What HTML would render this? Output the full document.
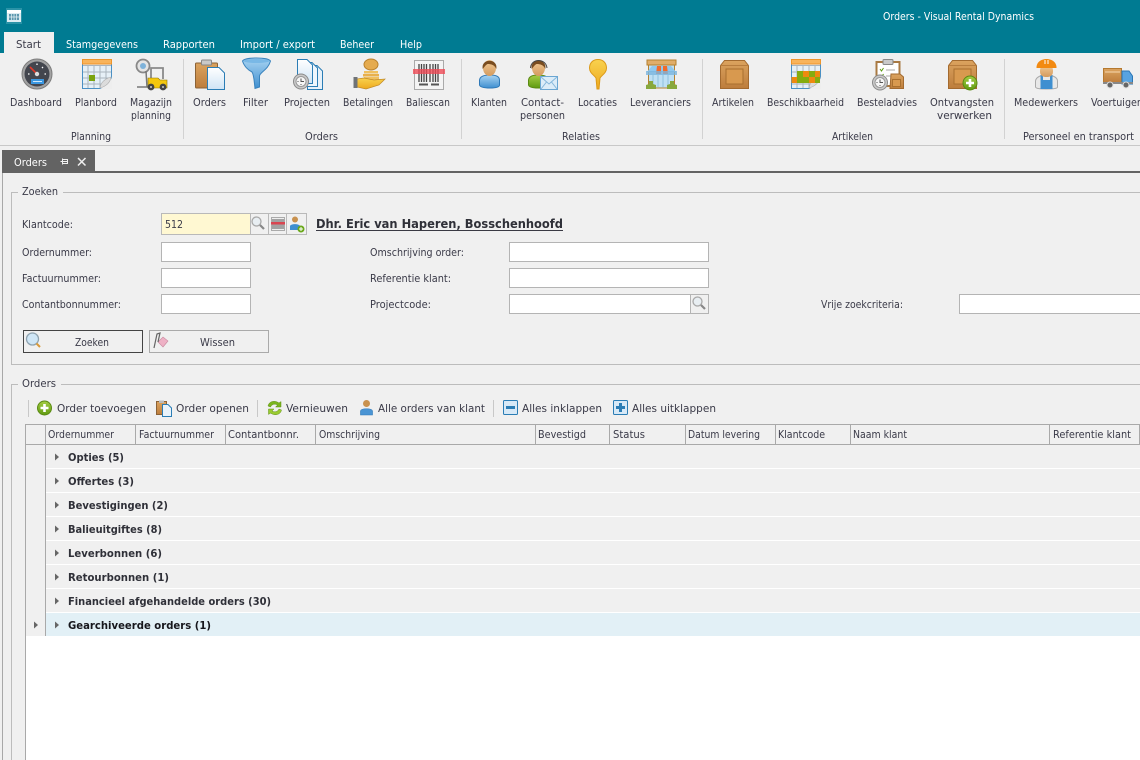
<!DOCTYPE html>
<html><head><meta charset="utf-8"><title>Orders - Visual Rental Dynamics</title>
<style>
html,body{margin:0;padding:0;background:#f0f0f0;overflow:hidden}
svg{display:block}
text{font-family:"DejaVu Sans","Liberation Sans",sans-serif;font-size:11px;fill:#3a3a48}
.w{fill:#fff}.b{font-weight:bold;fill:#2f3038;font-size:11px}
</style></head><body>
<svg width="1140" height="760" viewBox="0 0 1140 760" xmlns="http://www.w3.org/2000/svg">
<defs>
<linearGradient id="box" x1="0" y1="0" x2="0" y2="1"><stop offset="0" stop-color="#dba35f"/><stop offset="1" stop-color="#bd7d3c"/></linearGradient>
<linearGradient id="blue" x1="0" y1="0" x2="0" y2="1"><stop offset="0" stop-color="#a9d4f2"/><stop offset="1" stop-color="#3f8fd0"/></linearGradient>
<linearGradient id="gold" x1="0" y1="0" x2="0" y2="1"><stop offset="0" stop-color="#f9d24f"/><stop offset="1" stop-color="#eda91e"/></linearGradient>
<linearGradient id="doc" x1="0" y1="0" x2="0" y2="1"><stop offset="0" stop-color="#fff"/><stop offset="1" stop-color="#cfe4f5"/></linearGradient>
<linearGradient id="skin" x1="0" y1="0" x2="0" y2="1"><stop offset="0" stop-color="#f2cb96"/><stop offset="1" stop-color="#d39a5e"/></linearGradient>
<linearGradient id="green" x1="0" y1="0" x2="0" y2="1"><stop offset="0" stop-color="#a6cd45"/><stop offset="1" stop-color="#5f9a10"/></linearGradient>
<g id="clock"><circle cx="0" cy="0" r="7.500" fill="#c9c9c9" stroke="#8a8a8a"/><circle r="5" fill="#f6f6f6" stroke="#999"/><path d="M0-3V0H3M-3.500 0h1M0 2.500v1" stroke="#555" fill="none"/></g>
<g id="plus"><circle r="7" fill="url(#green)" stroke="#5a8a12"/><path d="M-4 0H4M0-4V4" stroke="#fff" stroke-width="2.600"/></g>
<g id="arrow"><path d="M0-3.500 4 0 0 3.500Z" fill="#666"/></g>
<g id="mag"><circle cx="-1.500" cy="-1.500" r="4.500" fill="#e8eef2" stroke="#a8a8a8" stroke-width="1.300"/><path d="M2 2 6 6" stroke="#888" stroke-width="2.200"/></g>
<g id="cal"><rect x=".5" y=".5" width="29" height="29" fill="#e6f0f7" stroke="#4a90c4"/><rect x=".5" y=".5" width="29" height="4.500" fill="#f8b45c" stroke="#f0952a"/><path d="M1 6.500H29M1 13H29M1 19H29M1 25H29M6 6V29M12 6V29M18 6V29M24 6V29" stroke="#aab5be" stroke-width="1" fill="none"/><path d="M18 30 30 30 30 18 Q28 25 18 30Z" fill="#eee"/><path d="M18 29 Q19 21 29 18 Q28 26 18 29Z" fill="#dcdcdc" stroke="#aaa" stroke-width=".6"/></g>
<g id="boxi"><path d="M4 0H24L28 5V28H0V5Z" fill="url(#box)" stroke="#a36a2f"/><path d="M0 5H28" stroke="#b87d3e"/><rect x="5.500" y="8.500" width="17" height="15" fill="#d8994f" stroke="#a9702f"/></g>
<g id="board"><rect x="0" y="3" width="22" height="25" rx="1" fill="url(#box)" stroke="#8b6236"/><rect x="6" y="0" width="10" height="5" rx="1" fill="#c9c9c9" stroke="#888"/></g>
<g id="head"><ellipse cx="0" cy="0" rx="6.500" ry="8" fill="url(#skin)"/><path d="M-6.800 1C-9-10 9-10 6.800 1 5-3 2-4-2-4-4-3-5-1-6.800 1Z" fill="#7a4d20"/></g>
</defs>

<rect width="1140" height="760" fill="#f0f0f0"/>
<!-- title bar -->
<rect width="1140" height="53" fill="#007b92"/>
<rect x="6" y="8" width="16" height="16" fill="#2a93a7"/>
<rect x="7" y="10" width="14" height="12" fill="#dcecf2"/>
<rect x="7" y="10" width="14" height="3" fill="#fff"/>
<path d="M9 14h10v6H9Z" fill="#5c97ae"/><path d="M11.500 14v6M14 14v6M16.500 14v6M9 17h10" stroke="#e6f2f6" stroke-width=".7"/>
<text class="w" x="883" y="20" textLength="151" lengthAdjust="spacingAndGlyphs">Orders - Visual Rental Dynamics</text>
<rect x="4" y="32" width="50" height="21" fill="#f0f0f0"/>
<text x="16" y="48" textLength="25" lengthAdjust="spacingAndGlyphs">Start</text>
<text class="w" x="66" y="48" textLength="72" lengthAdjust="spacingAndGlyphs">Stamgegevens</text>
<text class="w" x="163" y="48" textLength="52" lengthAdjust="spacingAndGlyphs">Rapporten</text>
<text class="w" x="240" y="48" textLength="75" lengthAdjust="spacingAndGlyphs">Import / export</text>
<text class="w" x="340" y="48" textLength="34" lengthAdjust="spacingAndGlyphs">Beheer</text>
<text class="w" x="400" y="48" textLength="22" lengthAdjust="spacingAndGlyphs">Help</text>

<!-- ribbon -->
<rect y="145" width="1140" height="1" fill="#c8c8c8"/>
<path d="M183.500 59V139M461.500 59V139M702.500 59V139M1004.500 59V139" stroke="#d2d2d2"/>

<!-- Dashboard -->
<circle cx="37" cy="74" r="15" fill="#a3a3a3" stroke="#7c7c7c"/><circle cx="37" cy="74" r="12.500" fill="#43464e"/>
<path d="M30 67 37 74" stroke="#e23a2a" stroke-width="1.600"/><circle cx="37" cy="74" r="2.200" fill="#ddd"/>
<path d="M37 63.500v1.500M28 74h1.500M44.500 74h1.500M43 67l-1 1" stroke="#fff" stroke-width="1.300"/>
<rect x="31" y="79" width="13" height="5" fill="#3b97e0"/><path d="M33 81.500h9" stroke="#cfe8fb"/>
<!-- Planbord -->
<use href="#cal" x="82" y="59"/><rect x="89" y="75" width="6" height="6" fill="#7aa30d"/>
<!-- Forklift -->
<circle cx="143" cy="66" r="6.500" fill="#e4e4e4" stroke="#888" stroke-width="1.800"/><circle cx="143" cy="66" r="3" fill="#7eb2da"/>
<path d="M146 71 147 87H137M147 87H155" stroke="#777" stroke-width="1.500" fill="none"/>
<path d="M151 79V68H163V79" stroke="#8a8a8a" stroke-width="1.800" fill="none"/><path d="M148 78H158L160 80H167V88H148Z" fill="#f4c70e" stroke="#8c7400" stroke-width=".6"/>
<circle cx="151" cy="87" r="3.400" fill="#444"/><circle cx="163" cy="87" r="3.400" fill="#444"/>
<circle cx="151" cy="87" r="1" fill="#ccc"/><circle cx="163" cy="87" r="1" fill="#ccc"/>
<!-- Orders -->
<use href="#board" x="195.500" y="60"/>
<path d="M207.500 67.500H219L224.500 73V89.500H207.500Z" fill="url(#doc)" stroke="#2b7db5"/>
<!-- Filter -->
<path d="M242.500 61C245 57 268 57 270.500 61 268 70 260 72 259.500 76V87L255 88.500C254 80 254 75 252 72 248 70 244 66 242.500 61Z" fill="url(#blue)" stroke="#3a83bd"/>
<ellipse cx="256.500" cy="61" rx="13" ry="2" fill="#79b8e6"/>
<!-- Projecten -->
<path d="M307.500 65.500H317L322.500 71V89.500H307.500Z" fill="#e6f1fa" stroke="#2b7db5"/>
<path d="M302.500 62.500H312L317.500 68V86.500H302.500Z" fill="#eef6fc" stroke="#2b7db5"/>
<path d="M297.500 59.500H307L312.500 65V83.500H297.500Z" fill="url(#doc)" stroke="#2b7db5"/>
<use href="#clock" x="301" y="81.500"/>
<!-- Betalingen -->
<ellipse cx="371" cy="64.500" rx="7" ry="5.500" fill="#e5ab4f" stroke="#b9812c"/>
<rect x="364" y="71" width="14" height="2.500" fill="#f0c05f"/><rect x="363" y="74" width="16" height="2.500" fill="#e8b04d"/><rect x="364" y="77" width="15" height="2.500" fill="#f0c05f"/>
<path d="M357 79 364 78 374 80 385 79 379 85 366 89 357 87Z" fill="url(#gold)" stroke="#c08a2a" stroke-width=".7"/>
<rect x="353.500" y="77" width="4" height="11" fill="#6f7377"/>
<!-- Baliescan -->
<rect x="414.500" y="60.500" width="29" height="29" fill="#f4f4f4" stroke="#aaa"/>
<path d="M419 64V82M421.500 64V82M424 64V82M426.500 64V82M430 64V82M433 64V82M435.500 64V82M438 64V82" stroke="#444" stroke-width="1.300"/>
<path d="M419 84.500H428M431 84.500H439" stroke="#555" stroke-width="2"/>
<rect x="413" y="69" width="32" height="5" fill="#ef4a55" opacity=".8"/>
<!-- Klanten -->
<path d="M479.500 85V80C480 76 485 75 490 75 495 75 499.500 76 499.500 80V85C499.500 87 497 88 490 88 483 88 480 87 479.500 85Z" fill="url(#blue)" stroke="#2f79b8"/>
<use href="#head" x="489.500" y="68"/>
<!-- Contact -->
<path d="M528.500 85V80C529 76 534 75 538 75 543 75 548 76 548 80V86C548 87 545 88 538 88 532 88 529 87 528.500 85Z" fill="url(#green)" stroke="#5a8a12"/>
<use href="#head" x="538.500" y="68"/><path d="M530.500 68C531 58 546 58 547 68" stroke="#444" fill="none"/>
<rect x="540.500" y="76.500" width="17" height="13" fill="#dbecf8" stroke="#6aa6d2"/><path d="M541 77 549 84 557 77M541 89 546.500 82M557 89 551.500 82" stroke="#84b6da" fill="none"/>
<!-- Locaties -->
<path d="M598 59.500C592 59.500 589.500 64 589.500 68 589.500 73 594 75 596 78L597 89H599L600 78C602 75 606.500 73 606.500 68 606.500 64 604 59.500 598 59.500Z" fill="url(#gold)" stroke="#dc9a18"/>
<!-- Leveranciers -->
<rect x="647" y="60" width="29" height="5" fill="#e0ad6a" stroke="#b5812f"/>
<rect x="648.500" y="65" width="26" height="23" fill="#bfe0f4" stroke="#b5812f"/>
<path d="M647 72 652 66H671L676 72Z" fill="#8fc8ee"/><path d="M657 66H661V74H656ZM663 66H667L668 74H663Z" fill="#f26a2a"/><path d="M646 71H677V75H646Z" fill="#7bb5de" opacity=".8"/>
<path d="M653 75V87M658 75V87M663 75V87M668 75V87" stroke="#8fbfdd"/>
<path d="M646 89V85L649 84V81H653V84L656 85V89ZM667 89V85L670 84V81H674V84L677 85V89Z" fill="#88a83d"/>
<!-- Artikelen -->
<use href="#boxi" x="720.500" y="60.500"/>
<!-- Beschik -->
<use href="#cal" x="791" y="59"/>
<path d="M797 71h6v6h-6ZM809 71h6v6h-6ZM803 77h6v6h-6Z" fill="#84ac10"/><path d="M803 71h6v6h-6ZM815 71h5v6h-5ZM791.500 77h6v6h-6ZM809 77h6v6h-6Z" fill="#ee8a10"/><path d="M797 77h6v6h-6ZM815 77h5v6h-5Z" fill="#84ac10"/>
<!-- Besteladvies -->
<rect x="876.500" y="62" width="23" height="24" fill="#fff" stroke="#a97a43" stroke-width="2"/><rect x="883" y="59.500" width="10" height="5" rx="1" fill="#c9c9c9" stroke="#888"/>
<path d="M880 69l1.500 2 2-3M880 75l1.500 2 2-3" stroke="#5a9c10" fill="none"/><path d="M886 70h9M886 76h9" stroke="#aaa"/>
<path d="M891 74H900L903.500 77V88.500H890Z" fill="url(#box)" stroke="#a36a2f"/><rect x="892.500" y="79.500" width="8" height="7" fill="#d8994f" stroke="#a9702f"/>
<use href="#clock" x="880" y="82.500"/>
<!-- Ontvangsten -->
<use href="#boxi" x="948.500" y="60.500"/><use href="#plus" x="970" y="83"/>
<!-- Medewerkers -->
<path d="M1035.500 87V81C1036 77 1041 75 1046 75 1052 75 1057.500 77 1057.500 81V87C1057.500 88.500 1054 89 1046 89 1039 89 1036 88.500 1035.500 87Z" fill="#e8e8e8" stroke="#aaa"/>
<path d="M1040.500 75V89H1052.500V75H1050V80H1043V75Z" fill="#3f8fd0"/>
<rect x="1040" y="65" width="13" height="12" rx="5" fill="url(#skin)"/>
<path d="M1036.500 68C1036 56 1057 56 1056.500 68Z" fill="#f28a12"/><path d="M1045 60v4M1048 60v4" stroke="#fff"/>
<!-- Voertuigen -->
<rect x="1103.500" y="68.500" width="18" height="14" fill="url(#box)" stroke="#b5792f"/><path d="M1105 72H1120" stroke="#f6d8b0"/>
<path d="M1122 71H1129L1132.500 76V84H1122Z" fill="#58a3e0" stroke="#2b76b5"/>
<rect x="1103" y="82" width="30" height="2" fill="#888"/>
<circle cx="1110" cy="85" r="3" fill="#666" stroke="#ddd"/><circle cx="1126" cy="85" r="3" fill="#666" stroke="#ddd"/>

<!-- ribbon labels -->
<text x="10" y="106" textLength="52" lengthAdjust="spacingAndGlyphs">Dashboard</text>
<text x="75" y="106" textLength="42" lengthAdjust="spacingAndGlyphs">Planbord</text>
<text x="130" y="106" textLength="42" lengthAdjust="spacingAndGlyphs">Magazijn</text>
<text x="131" y="119" textLength="40" lengthAdjust="spacingAndGlyphs">planning</text>
<text x="71" y="140" textLength="40" lengthAdjust="spacingAndGlyphs">Planning</text>
<text x="193" y="106" textLength="33" lengthAdjust="spacingAndGlyphs">Orders</text>
<text x="243" y="106" textLength="25" lengthAdjust="spacingAndGlyphs">Filter</text>
<text x="284" y="106" textLength="46" lengthAdjust="spacingAndGlyphs">Projecten</text>
<text x="343" y="106" textLength="50" lengthAdjust="spacingAndGlyphs">Betalingen</text>
<text x="406" y="106" textLength="44" lengthAdjust="spacingAndGlyphs">Baliescan</text>
<text x="305" y="140" textLength="33" lengthAdjust="spacingAndGlyphs">Orders</text>
<text x="471" y="106" textLength="36" lengthAdjust="spacingAndGlyphs">Klanten</text>
<text x="521" y="106" textLength="43" lengthAdjust="spacingAndGlyphs">Contact-</text>
<text x="520" y="119" textLength="45" lengthAdjust="spacingAndGlyphs">personen</text>
<text x="578" y="106" textLength="39" lengthAdjust="spacingAndGlyphs">Locaties</text>
<text x="630" y="106" textLength="61" lengthAdjust="spacingAndGlyphs">Leveranciers</text>
<text x="562" y="140" textLength="38" lengthAdjust="spacingAndGlyphs">Relaties</text>
<text x="712" y="106" textLength="42" lengthAdjust="spacingAndGlyphs">Artikelen</text>
<text x="767" y="106" textLength="77" lengthAdjust="spacingAndGlyphs">Beschikbaarheid</text>
<text x="857" y="106" textLength="60" lengthAdjust="spacingAndGlyphs">Besteladvies</text>
<text x="930" y="106" textLength="64" lengthAdjust="spacingAndGlyphs">Ontvangsten</text>
<text x="937" y="119" textLength="55" lengthAdjust="spacingAndGlyphs">verwerken</text>
<text x="832" y="140" textLength="41" lengthAdjust="spacingAndGlyphs">Artikelen</text>
<text x="1014" y="106" textLength="64" lengthAdjust="spacingAndGlyphs">Medewerkers</text>
<text x="1091" y="106" textLength="52" lengthAdjust="spacingAndGlyphs">Voertuigen</text>
<text x="1023" y="140" textLength="111" lengthAdjust="spacingAndGlyphs">Personeel en transport</text>

<!-- doc tab -->
<rect x="2" y="150" width="93" height="21" fill="#636363"/>
<rect x="2" y="171" width="1138" height="2" fill="#636363"/>
<rect x="2" y="173" width="1" height="587" fill="#a8a8a8"/>
<text class="w" x="14" y="166" textLength="33" lengthAdjust="spacingAndGlyphs">Orders</text>
<path d="M60.500 161.500H62M62.500 158.500V164.500M63 159.500H67.500V163.500H63M63 161.500H67.500" stroke="#f0f0f0" fill="none"/>
<path d="M78 158 85.500 165.500M85.500 158 78 165.500" stroke="#eee" stroke-width="1.500"/>

<!-- Zoeken group -->
<path d="M1140 192.500H63M18 192.500H11.500V364.500H1140" stroke="#bcbcbc" fill="none"/>
<text x="22" y="195" textLength="36" lengthAdjust="spacingAndGlyphs">Zoeken</text>
<text x="22" y="228" textLength="51" lengthAdjust="spacingAndGlyphs">Klantcode:</text>
<rect x="161.500" y="213.500" width="89" height="21" fill="#fff8d2" stroke="#b9b9b9"/>
<text x="165" y="228" textLength="18" lengthAdjust="spacingAndGlyphs">512</text>
<rect x="250.500" y="213.500" width="18" height="21" fill="#f0f0f0" stroke="#b9b9b9"/>
<rect x="268.500" y="213.500" width="18" height="21" fill="#f0f0f0" stroke="#b9b9b9"/>
<rect x="286.500" y="213.500" width="20" height="21" fill="#f0f0f0" stroke="#b9b9b9"/>
<use href="#mag" x="258" y="223" />
<rect x="271.500" y="217.500" width="13" height="13" fill="#eee" stroke="#aaa"/><path d="M273 219V229M275 219V229M277 219V229M279 219V229M281 219V229M283 219V229" stroke="#555"/><rect x="271" y="222" width="14" height="2.500" fill="#d94550"/>
<circle cx="295" cy="219.500" r="3" fill="#c9924f"/><path d="M290 230V226C291 223.500 299 223.500 300 226V230Z" fill="#3f8fd0"/><circle cx="301" cy="229" r="3.500" fill="#6aa81a"/><path d="M299 229h4M301 227v4" stroke="#fff"/>
<text class="b" x="316" y="228" textLength="247" lengthAdjust="spacingAndGlyphs" style="font-size:12.500px">Dhr. Eric van Haperen, Bosschenhoofd</text>
<rect x="316" y="230" width="247" height="1" fill="#3a3a44"/>

<text x="22" y="256" textLength="70" lengthAdjust="spacingAndGlyphs">Ordernummer:</text>
<text x="22" y="282" textLength="79" lengthAdjust="spacingAndGlyphs">Factuurnummer:</text>
<text x="22" y="308" textLength="99" lengthAdjust="spacingAndGlyphs">Contantbonnummer:</text>
<g fill="#fff" stroke="#b4b4b4">
<rect x="161.500" y="242.500" width="89" height="19"/>
<rect x="161.500" y="268.500" width="89" height="19"/>
<rect x="161.500" y="294.500" width="89" height="19"/>
<rect x="509.500" y="242.500" width="199" height="19"/>
<rect x="509.500" y="268.500" width="199" height="19"/>
<rect x="509.500" y="294.500" width="199" height="19"/>
<rect x="959.500" y="294.500" width="190" height="19"/>
</g>
<rect x="690.500" y="294.500" width="18" height="19" fill="#f0f0f0" stroke="#b4b4b4"/>
<use href="#mag" x="699" y="303"/>
<text x="370" y="256" textLength="94" lengthAdjust="spacingAndGlyphs">Omschrijving order:</text>
<text x="370" y="282" textLength="81" lengthAdjust="spacingAndGlyphs">Referentie klant:</text>
<text x="370" y="308" textLength="61" lengthAdjust="spacingAndGlyphs">Projectcode:</text>
<text x="821" y="308" textLength="82" lengthAdjust="spacingAndGlyphs">Vrije zoekcriteria:</text>

<rect x="23.500" y="330.500" width="119" height="22" fill="#f0f0f0" stroke="#444"/>
<circle cx="32.500" cy="339" r="6" fill="#cfe6f6" stroke="#8fa3b0" stroke-width="1.300"/><path d="M36.500 343.500 40 347" stroke="#d99a3a" stroke-width="2"/>
<text x="75" y="346" textLength="34" lengthAdjust="spacingAndGlyphs">Zoeken</text>
<rect x="149.500" y="330.500" width="119" height="22" fill="#f0f0f0" stroke="#aaa"/>
<path d="M158 342 163 337 168 341 163 347Z" fill="#eeb1c5" stroke="#c98aa0" stroke-width=".6"/><path d="M154 348 157 334 160 333 158 342" fill="none" stroke="#666" stroke-width="1.200"/>
<text x="200" y="346" textLength="35" lengthAdjust="spacingAndGlyphs">Wissen</text>

<!-- Orders group -->
<path d="M1140 384.500H61M18 384.500H11.500V760" stroke="#bcbcbc" fill="none"/>
<text x="22" y="387" textLength="34" lengthAdjust="spacingAndGlyphs">Orders</text>

<!-- toolbar -->
<path d="M28.500 400V417M257.500 400V417M493.500 400V417" stroke="#c8c8c8"/>
<use href="#plus" x="44.500" y="408"/>
<text x="57" y="412" textLength="89" lengthAdjust="spacingAndGlyphs">Order toevoegen</text>
<rect x="156.500" y="401.500" width="10" height="13" fill="url(#box)" stroke="#8b6236"/><rect x="159" y="400.500" width="5" height="2.500" fill="#bbb"/>
<path d="M162.500 404.500H168L171.500 408V416.500H162.500Z" fill="#e9f3fb" stroke="#2b7db5"/>
<text x="176" y="412" textLength="73" lengthAdjust="spacingAndGlyphs">Order openen</text>
<path d="M268 406C269 401 275 400 279 403L281 401.500V407H275.500L277.500 405C275 403.500 272 404 270.500 407Z" fill="#7ab51d" stroke="#5f8f14" stroke-width=".5"/>
<path d="M281.500 410C280.500 415 274.500 416 270.500 413L268.500 414.500V409H274L272 411C274.500 412.500 277.500 412 279 409Z" fill="#9acb30" stroke="#5f8f14" stroke-width=".5"/>
<text x="286" y="412" textLength="62" lengthAdjust="spacingAndGlyphs">Vernieuwen</text>
<circle cx="366.500" cy="403.500" r="3.500" fill="#c9924f"/><path d="M360.500 415V411C361 408 372 408 372.500 411V415Z" fill="#4a94d4" stroke="#2f79b8" stroke-width=".6"/>
<text x="378" y="412" textLength="107" lengthAdjust="spacingAndGlyphs">Alle orders van klant</text>
<rect x="503.500" y="400.500" width="14" height="14" rx="1" fill="#d7e9f7" stroke="#2b7db5"/><rect x="506" y="406" width="9" height="3" fill="#2b7db5"/>
<text x="522" y="412" textLength="80" lengthAdjust="spacingAndGlyphs">Alles inklappen</text>
<rect x="613.500" y="400.500" width="14" height="14" rx="1" fill="#d7e9f7" stroke="#2b7db5"/><path d="M616 406h3v-3h3v3h3v3h-3v3h-3v-3h-3Z" fill="#2b7db5"/>
<text x="632" y="412" textLength="84" lengthAdjust="spacingAndGlyphs">Alles uitklappen</text>

<!-- grid -->
<rect x="25" y="425" width="1115" height="335" fill="#fff"/>
<rect x="26" y="445" width="1114" height="23" fill="#f0f0f0"/>
<rect x="26" y="469" width="1114" height="23" fill="#f0f0f0"/>
<rect x="26" y="493" width="1114" height="23" fill="#f0f0f0"/>
<rect x="26" y="517" width="1114" height="23" fill="#f0f0f0"/>
<rect x="26" y="541" width="1114" height="23" fill="#f0f0f0"/>
<rect x="26" y="565" width="1114" height="23" fill="#f0f0f0"/>
<rect x="26" y="589" width="1114" height="23" fill="#f0f0f0"/>
<rect x="46" y="613" width="1094" height="23" fill="#e2f0f6"/>
<rect x="26" y="445" width="19" height="191" fill="#f0f0f0"/>
<rect x="25" y="425" width="1115" height="19" fill="#f0f0f0"/>
<path d="M25.500 424.500H1139.500V444.500H25.500ZM25.500 444V760" fill="none" stroke="#a9a9a9"/>
<path d="M45.500 425V636M135.500 425V444M225.500 425V444M315.500 425V444M535.500 425V444M609.500 425V444M685.500 425V444M775.500 425V444M850.500 425V444M1049.500 425V444" stroke="#a9a9a9"/>
<text x="48" y="438" textLength="66" lengthAdjust="spacingAndGlyphs">Ordernummer</text>
<text x="139" y="438" textLength="75" lengthAdjust="spacingAndGlyphs">Factuurnummer</text>
<text x="228" y="438" textLength="71" lengthAdjust="spacingAndGlyphs">Contantbonnr.</text>
<text x="319" y="438" textLength="61" lengthAdjust="spacingAndGlyphs">Omschrijving</text>
<text x="538" y="438" textLength="48" lengthAdjust="spacingAndGlyphs">Bevestigd</text>
<text x="613" y="438" textLength="32" lengthAdjust="spacingAndGlyphs">Status</text>
<text x="688" y="438" textLength="72" lengthAdjust="spacingAndGlyphs">Datum levering</text>
<text x="778" y="438" textLength="47" lengthAdjust="spacingAndGlyphs">Klantcode</text>
<text x="853" y="438" textLength="54" lengthAdjust="spacingAndGlyphs">Naam klant</text>
<text x="1053" y="438" textLength="78" lengthAdjust="spacingAndGlyphs">Referentie klant</text>

<use href="#arrow" x="55" y="457"/><text class="b" x="68" y="461" textLength="56" lengthAdjust="spacingAndGlyphs">Opties (5)</text>
<use href="#arrow" x="55" y="481"/><text class="b" x="68" y="485" textLength="66" lengthAdjust="spacingAndGlyphs">Offertes (3)</text>
<use href="#arrow" x="55" y="505"/><text class="b" x="68" y="509" textLength="100" lengthAdjust="spacingAndGlyphs">Bevestigingen (2)</text>
<use href="#arrow" x="55" y="529"/><text class="b" x="68" y="533" textLength="94" lengthAdjust="spacingAndGlyphs">Balieuitgiftes (8)</text>
<use href="#arrow" x="55" y="553"/><text class="b" x="68" y="557" textLength="94" lengthAdjust="spacingAndGlyphs">Leverbonnen (6)</text>
<use href="#arrow" x="55" y="577"/><text class="b" x="68" y="581" textLength="101" lengthAdjust="spacingAndGlyphs">Retourbonnen (1)</text>
<use href="#arrow" x="55" y="601"/><text class="b" x="68" y="605" textLength="203" lengthAdjust="spacingAndGlyphs">Financieel afgehandelde orders (30)</text>
<use href="#arrow" x="34" y="625"/>
<use href="#arrow" x="55" y="625"/><text class="b" x="68" y="629" textLength="143" lengthAdjust="spacingAndGlyphs" style="fill:#16161c">Gearchiveerde orders (1)</text>
</svg>
</body></html>
